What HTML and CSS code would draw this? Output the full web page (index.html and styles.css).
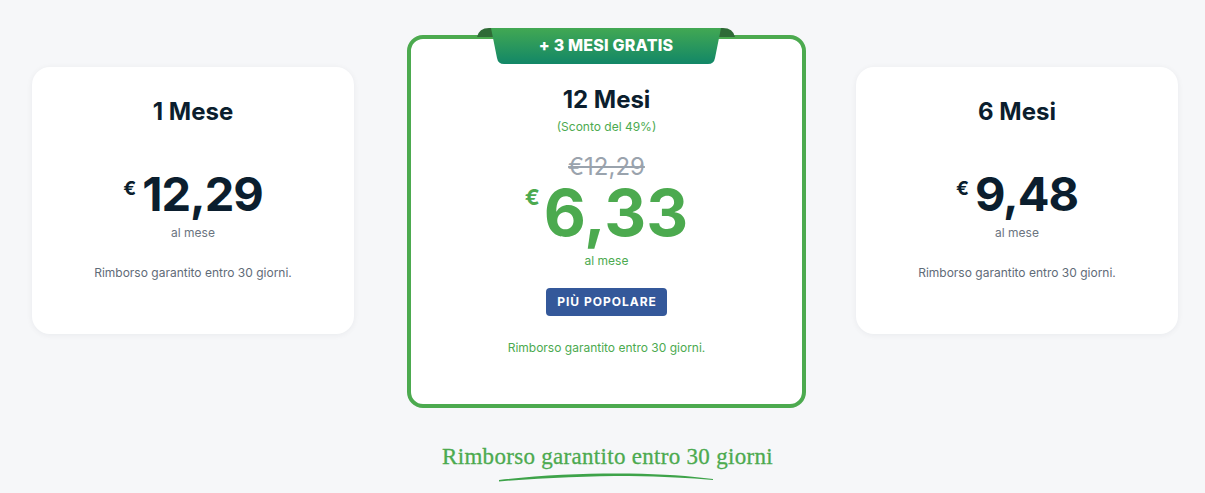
FILE: index.html
```html
<!DOCTYPE html>
<html lang="it">
<head>
<meta charset="utf-8">
<title>Prezzi</title>
<link rel="stylesheet" href="styles.css">
</head>
<body>
<main class="page">
  <section class="plans">
    <div class="card side">
      <h2 class="title">1 Mese</h2>
      <div class="price"><span class="cur">€</span><span class="amount">12,29</span></div>
      <div class="per">al mese</div>
      <p class="refund">Rimborso garantito entro 30 giorni.</p>
    </div>

    <div class="card featured">
      <div class="ribbon">
        <svg class="ribbon-bg" width="260" height="36" viewBox="0 0 260 36" aria-hidden="true">
          <defs>
            <linearGradient id="rg" x1="0" y1="0" x2="0" y2="1">
              <stop offset="0" stop-color="#42a853"/>
              <stop offset="1" stop-color="#128767"/>
            </linearGradient>
          </defs>
          <path d="M1,9 Q3,0 13,0 L20,0 L20,9 Z" fill="#2f6b36"/>
          <path d="M240,0 L247,0 Q257,0 259,9 L240,9 Z" fill="#2f6b36"/>
          <path d="M15,0 L245,0 L239,30 Q238,36 232,36 L28,36 Q22,36 21,30 Z" fill="url(#rg)"/>
        </svg>
        <span class="ribbon-text">+ 3 MESI GRATIS</span>
      </div>
      <h2 class="title">12 Mesi</h2>
      <div class="discount">(Sconto del 49%)</div>
      <div class="old">€12,29</div>
      <div class="price big"><span class="cur">€</span><span class="amount">6,33</span></div>
      <div class="per">al mese</div>
      <span class="badge">PIÙ POPOLARE</span>
      <p class="refund">Rimborso garantito entro 30 giorni.</p>
    </div>

    <div class="card side">
      <h2 class="title">6 Mesi</h2>
      <div class="price"><span class="cur">€</span><span class="amount">9,48</span></div>
      <div class="per">al mese</div>
      <p class="refund">Rimborso garantito entro 30 giorni.</p>
    </div>
  </section>

  <section class="guarantee">
    <h3 class="g-title">Rimborso garantito entro 30 giorni</h3>
    <svg class="brush" width="214" height="10" viewBox="0 0 214 10" aria-hidden="true">
      <path d="M0,8 C40,3 90,1 130,1.5 C165,2 190,4 214,7 L214,8 C190,6 165,4.5 130,4 C90,4 40,6 0,9.5 Z" fill="#3ea34a"/>
    </svg>
  </section>
</main>
</body>
</html>
```

FILE: styles.css
```css
* { box-sizing: border-box; }
html, body { margin: 0; padding: 0; }
body {
  background: #f6f7f9;
  font-family: Inter, "Noto Sans", sans-serif;
  color: #0b1e2e;
  width: 1205px;
  height: 493px;
  overflow: hidden;
}
.page { padding-top: 35px; }
.plans {
  display: flex;
  align-items: flex-start;
  padding-left: 32px;
}
.card {
  background: #fff;
  border-radius: 18px;
  display: flex;
  flex-direction: column;
  align-items: center;
  text-align: center;
}
.side {
  width: 322px;
  height: 267px;
  margin-top: 32px;
  padding-top: 31px;
  box-shadow: 0 1px 6px rgba(20, 30, 50, 0.06);
}
.plans .side:first-child { margin-right: 53px; }
.plans .side:last-child { margin-left: 50px; }
.featured {
  position: relative;
  width: 399px;
  height: 373px;
  border: 4px solid #4caa4f;
  border-radius: 16px;
  padding-top: 47px;
}
.title {
  margin: 0;
  font-size: 24px;
  line-height: 28px;
  font-weight: 700;
  color: #0b1e2e;
}
.price {
  display: flex;
  align-items: flex-start;
  justify-content: center;
  margin-top: 48px;
  color: #0b1e2e;
}
.price .cur {
  font-size: 19px;
  font-weight: 700;
  line-height: 1;
  margin-top: 5px;
  margin-right: 6px;
}
.price .amount {
  font-size: 47px;
  font-weight: 700;
  line-height: 40px;
  letter-spacing: -1px;
}
.per {
  font-size: 12px;
  line-height: 16px;
  color: #6b7480;
  margin-top: 11px;
}
.refund {
  margin: 24px 0 0;
  font-size: 12px;
  line-height: 16px;
  color: #5f6b78;
}
.discount {
  font-size: 12px;
  line-height: 16px;
  color: #4caa4f;
  margin-top: 5px;
}
.old {
  font-size: 24px;
  line-height: 24px;
  color: #9aa3ad;
  text-decoration: line-through;
  text-decoration-thickness: 2px;
  margin-top: 20px;
}
.price.big {
  margin-top: 4px;
  color: #4caa4f;
}
.price.big .cur { font-size: 22px; margin-top: 3px; margin-right: 4px; }
.price.big .amount {
  font-size: 65px;
  line-height: 60px;
  letter-spacing: 0;
}
.featured .per { color: #4caa4f; margin-top: 10px; }
.badge {
  margin-top: 19px;
  display: inline-block;
  background: #34589a;
  color: #fff;
  font-size: 12px;
  font-weight: 700;
  letter-spacing: 1px;
  line-height: 28px;
  height: 28px;
  padding: 0 10px 0 11px;
  border-radius: 4px;
}
.featured .refund { color: #4caa4f; margin-top: 24px; }
.ribbon {
  position: absolute;
  top: -11px;
  left: 65px;
  width: 260px;
  height: 36px;
}
.ribbon-bg { position: absolute; left: 0; top: 0; }
.ribbon-text {
  position: relative;
  display: block;
  text-align: center;
  font-size: 16px;
  font-weight: 800;
  line-height: 36px;
  color: #fff;
  letter-spacing: 0.2px;
  margin-top: -1px;
}
.guarantee {
  display: flex;
  flex-direction: column;
  align-items: center;
  margin-top: 36px;
  padding-left: 10px;
}
.g-title {
  margin: 0;
  font-family: "Liberation Serif", "DejaVu Serif", serif;
  font-weight: 400;
  font-size: 23px;
  line-height: 26px;
  color: #4caa4f;
  letter-spacing: 0.3px;
  -webkit-text-stroke: 0.3px #4caa4f;
}
.brush { margin-top: 2px; margin-left: -4px; }
```
